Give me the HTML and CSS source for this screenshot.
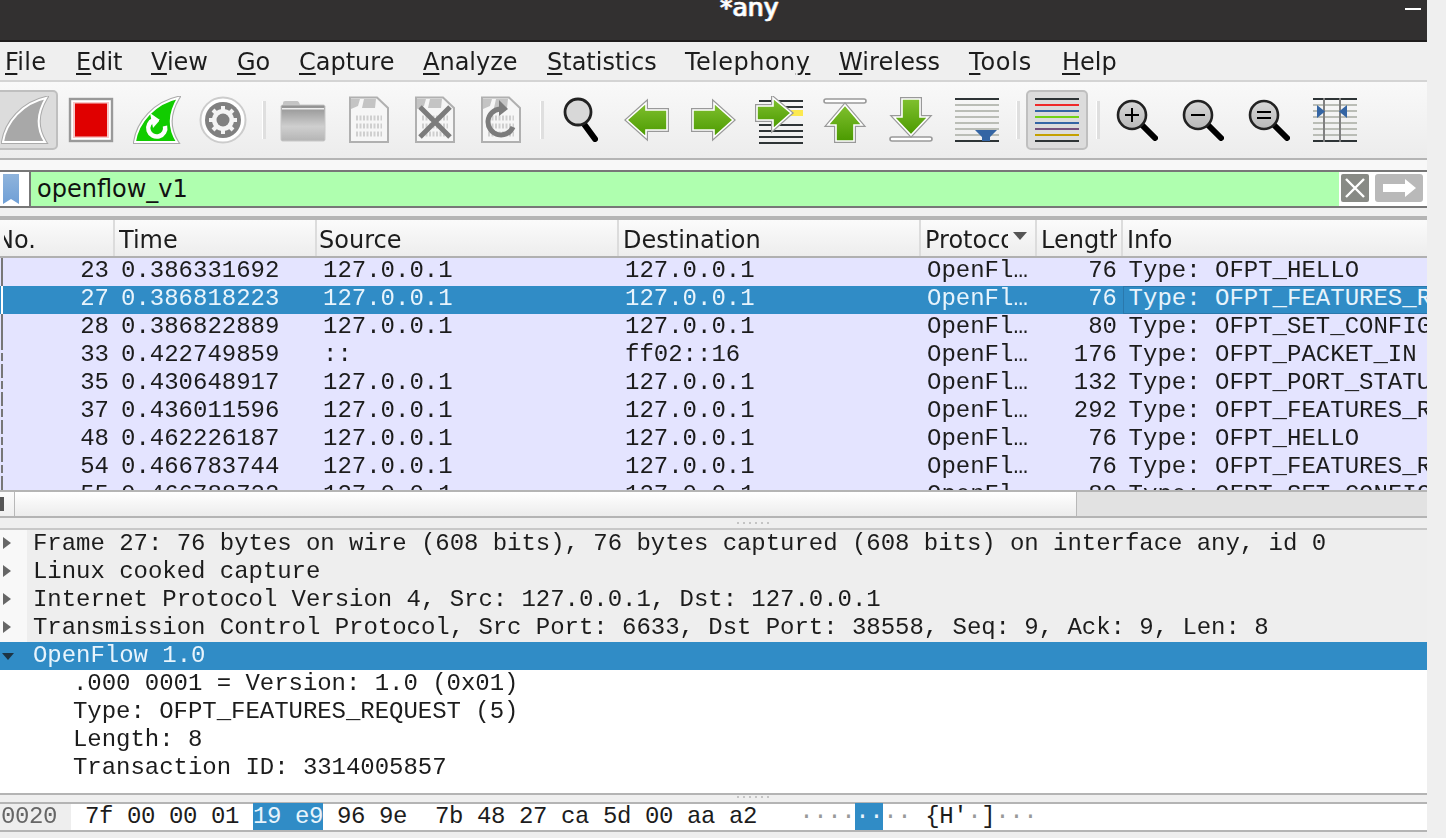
FILE: index.html
```html
<!DOCTYPE html>
<html lang="en">
<head>
<meta charset="utf-8">
<title>*any</title>
<link rel="stylesheet" href="styles.css">
</head>
<body>
<svg class="defs" width="0" height="0" aria-hidden="true">
  <defs>
    <linearGradient id="gr" x1="0" y1="0" x2="0" y2="1"><stop offset="0" stop-color="#80c02f"/><stop offset="1" stop-color="#4b9a00"/></linearGradient>
    <linearGradient id="gl" x1="0" y1="0" x2="0" y2="1"><stop offset="0" stop-color="#d8d8d8"/><stop offset="1" stop-color="#b8b8b8"/></linearGradient>
    <linearGradient id="fo" x1="0" y1="0" x2="0" y2="1"><stop offset="0" stop-color="#8f8f8f"/><stop offset=".6" stop-color="#cfcfcf"/><stop offset="1" stop-color="#b4b4b4"/></linearGradient>
    <linearGradient id="bm" x1="0" y1="0" x2="0" y2="1"><stop offset="0" stop-color="#8fb4dc"/><stop offset="1" stop-color="#6f9fd6"/></linearGradient>
    <path id="fin" d="M2 46 C5 26 22 7 45 2 C36 17 35 32 44 46 Z"/>
    <path id="arr" d="M4 14 H25 V7 L44 24 L25 41 V34 H4 Z"/>
    <g id="sheet">
      <path d="M5 1.5 H32 L43 12 V46 H5 Z" fill="#f6f6f6" stroke="#b0b0b0" stroke-width="2"/>
      <path d="M6 3 H15 L13 10 L6 13 Z M19 3 H31 L30 12 H17 Z" fill="#c4c4c4"/>
      <g stroke="#cfcfcf" stroke-width="5" stroke-dasharray="2 1.5">
        <path d="M11 22 H37 M11 30 H37 M11 38 H37"/>
      </g>
    </g>
    <g id="glass">
      <line x1="28" y1="28" x2="42" y2="42" stroke="#000" stroke-width="6" stroke-linecap="round"/>
      <circle cx="19" cy="19" r="14" fill="url(#gl)" stroke="#222" stroke-width="2.6"/>
    </g>
  </defs>
</svg>
<div class="window">
  <header class="titlebar">
    <span class="wintitle">*any</span>
    <span class="minimize"></span>
  </header>

  <nav class="menubar">
    <span class="menu m-file"><u>F</u>ile</span>
    <span class="menu m-edit"><u>E</u>dit</span>
    <span class="menu m-view"><u>V</u>iew</span>
    <span class="menu m-go"><u>G</u>o</span>
    <span class="menu m-capture"><u>C</u>apture</span>
    <span class="menu m-analyze"><u>A</u>nalyze</span>
    <span class="menu m-statistics"><u>S</u>tatistics</span>
    <span class="menu m-telephony">Telephon<u>y</u></span>
    <span class="menu m-wireless"><u>W</u>ireless</span>
    <span class="menu m-tools"><u>T</u>ools</span>
    <span class="menu m-help"><u>H</u>elp</span>
  </nav>

  <div class="toolbar">
    <div class="tool checked"><svg viewBox="0 0 48 48"><use href="#fin" fill="none" stroke="#aaa" stroke-width="4"/><use href="#fin" fill="#a8a8a8" stroke="#fff" stroke-width="2"/></svg></div>
    <div class="tool"><svg viewBox="0 0 48 48"><rect x="3" y="3" width="42" height="42" fill="#fff" stroke="#999" stroke-width="2.4"/><rect x="6" y="6" width="36" height="36" fill="#f6c8c8"/><rect x="8" y="7.5" width="32" height="33" fill="#e00000"/></svg></div>
    <div class="tool"><svg viewBox="0 0 48 48"><use href="#fin" fill="none" stroke="#aaa" stroke-width="4"/><use href="#fin" fill="#11cc00" stroke="#fff" stroke-width="1.8"/><path d="M32 30 A8.5 8.5 0 1 1 21 24" fill="none" stroke="#fff" stroke-width="4.5"/><path d="M17 17 L27 24 L20 32 Z" fill="#fff"/><path d="M27 24 V32 H23" fill="none" stroke="#11cc00" stroke-width="2"/></svg></div>
    <div class="tool"><svg viewBox="0 0 48 48"><circle cx="24" cy="24" r="22.5" fill="#fff" stroke="#ccc" stroke-width="2"/><circle cx="24" cy="24" r="18" fill="#808080"/><g stroke="#f4f4f4" stroke-width="4"><path d="M24 10 V38 M10 24 H38 M14 14 L34 34 M34 14 L14 34"/></g><circle cx="24" cy="24" r="11" fill="#f4f4f4"/><circle cx="24" cy="24" r="6.5" fill="#808080"/></svg></div>
    <div class="sep"></div>
    <div class="tool"><svg viewBox="0 0 48 48"><path d="M4 9 V7 Q4 5 6 5 H18 Q20 5 21 9 Z" fill="#c4c4c4"/><rect x="2" y="9" width="44" height="36" rx="1.5" fill="url(#fo)" stroke="#c8c8c8" stroke-width="1"/><rect x="3" y="12" width="42" height="1.5" fill="#eee"/></svg></div>
    <div class="tool"><svg viewBox="0 0 48 48"><use href="#sheet"/></svg></div>
    <div class="tool"><svg viewBox="0 0 48 48"><use href="#sheet"/><path d="M9 11 L39 41 M39 11 L9 41" stroke="#7c7c7c" stroke-width="5"/></svg></div>
    <div class="tool"><svg viewBox="0 0 48 48"><use href="#sheet"/><path d="M36 31 A13 13 0 1 1 23 13" fill="none" stroke="#7c7c7c" stroke-width="5"/><path d="M22 4 L31 13 L22 20 Z" fill="#7c7c7c"/></svg></div>
    <div class="sep"></div>
    <div class="tool"><svg viewBox="0 0 48 48"><line x1="27" y1="28" x2="38" y2="43" stroke="#000" stroke-width="6" stroke-linecap="round"/><circle cx="21" cy="16" r="13" fill="#d8d8d8" stroke="#222" stroke-width="2.8"/></svg></div>
    <div class="tool"><svg viewBox="0 0 48 48"><g transform="matrix(-1 0 0 1 48 0)"><use href="#arr" fill="none" stroke="#999" stroke-width="4"/><use href="#arr" fill="url(#gr)" stroke="#fff" stroke-width="1.6"/></g></svg></div>
    <div class="tool"><svg viewBox="0 0 48 48"><use href="#arr" fill="none" stroke="#999" stroke-width="4"/><use href="#arr" fill="url(#gr)" stroke="#fff" stroke-width="1.6"/></svg></div>
    <div class="tool"><svg viewBox="0 0 48 48"><g stroke="#2e3436" stroke-width="2"><path d="M4 5 H48 M4 11 H48 M4 29 H48 M4 35 H48 M4 41 H48 M4 47 H48"/></g><rect x="36" y="14" width="12" height="6" fill="#fce94f"/><path d="M2 10 H18 V2 L36 17 L18 33 V24 H2 Z" fill="none" stroke="#999" stroke-width="4"/><path d="M2 10 H18 V2 L36 17 L18 33 V24 H2 Z" fill="url(#gr)" stroke="#fff" stroke-width="1.6"/></svg></div>
    <div class="tool"><svg viewBox="0 0 48 48"><rect x="3" y="3" width="42" height="4" rx="2" fill="#fff" stroke="#999" stroke-width="1.6"/><path d="M24 9 L41 29 H33 V45 H15 V29 H7 Z" fill="none" stroke="#999" stroke-width="4"/><path d="M24 9 L41 29 H33 V45 H15 V29 H7 Z" fill="url(#gr)" stroke="#fff" stroke-width="1.6"/></svg></div>
    <div class="tool"><svg viewBox="0 0 48 48"><rect x="3" y="41" width="42" height="4" rx="2" fill="#fff" stroke="#999" stroke-width="1.6"/><path d="M15 3 H33 V21 H41 L24 39 L7 21 H15 Z" fill="none" stroke="#999" stroke-width="4"/><path d="M15 3 H33 V21 H41 L24 39 L7 21 H15 Z" fill="url(#gr)" stroke="#fff" stroke-width="1.6"/></svg></div>
    <div class="tool"><svg viewBox="0 0 48 48"><g stroke-width="2"><path d="M2 3 H46 M2 45 H46" stroke="#2e3436"/><path d="M2 9 H46 M2 15 H46 M2 21 H46 M2 27 H46 M2 33 H46 M2 39 H46" stroke="#babdb6"/></g><path d="M22 34 H44 L37 41 V45 H29 V41 Z" fill="#3465a4"/></svg></div>
    <div class="sep"></div>
    <div class="tool checked-b"><svg viewBox="0 0 48 48"><g stroke-width="2"><path d="M2 3 H46" stroke="#2e3436"/><path d="M2 9 H46" stroke="#ef2929"/><path d="M2 15 H46" stroke="#3465a4"/><path d="M2 21 H46" stroke="#73d216"/><path d="M2 27 H46" stroke="#3465a4"/><path d="M2 33 H46" stroke="#75507b"/><path d="M2 39 H46" stroke="#c4a000"/><path d="M2 45 H46" stroke="#2e3436"/></g></svg></div>
    <div class="sep"></div>
    <div class="tool"><svg viewBox="0 0 48 48"><use href="#glass"/><path d="M12 19 H26 M19 12 V26" stroke="#000" stroke-width="2"/></svg></div>
    <div class="tool"><svg viewBox="0 0 48 48"><use href="#glass"/><path d="M12 19 H26" stroke="#000" stroke-width="2"/></svg></div>
    <div class="tool"><svg viewBox="0 0 48 48"><use href="#glass"/><path d="M12 16 H26 M12 22 H26" stroke="#000" stroke-width="2"/></svg></div>
    <div class="tool"><svg viewBox="0 0 48 48"><g stroke-width="2"><path d="M2 3 H46 M2 45 H46" stroke="#2e3436"/><path d="M2 9 H46 M2 15 H46 M2 21 H46 M2 27 H46 M2 33 H46 M2 39 H46" stroke="#babdb6"/><path d="M13 2 V46 M29 2 V46" stroke="#808080"/></g><path d="M6 9 L14 15.5 L6 22 Z M36 9 L28 15.5 L36 22 Z" fill="#3465a4"/></svg></div>
  </div>

  <div class="filterbar">
    <div class="bookmark"><svg viewBox="0 0 16 30" width="16" height="30"><path d="M0 0 H16 V30 L8 25 L0 30 Z" fill="url(#bm)"/></svg></div>
    <div class="filterfield">openflow_v1</div>
    <div class="filteractions">
      <span class="clearbtn"><svg viewBox="0 0 28 28" width="28" height="28"><path d="M5 5 L23 23 M23 5 L5 23" stroke="#fff" stroke-width="2.4"/></svg></span>
      <span class="applybtn"><svg viewBox="0 0 48 28" width="48" height="28"><path d="M8 10 H30 V5 L41 14 L30 23 V18 H8 Z" fill="#fff"/></svg></span>
    </div>
  </div>

  <div class="gap-line"></div>

  <div class="packetlist">
    <div class="head">
      <div class="hc hc-no"><span>No.</span></div>
      <div class="hc"><span>Time</span></div>
      <div class="hc hc-src"><span>Source</span></div>
      <div class="hc"><span>Destination</span></div>
      <div class="hc hc-proto"><span>Protocol</span><i class="sort"></i></div>
      <div class="hc hc-len"><span>Length</span></div>
      <div class="hc hc-last"><span>Info</span></div>
    </div>
    <div class="rows">
      <div class="row"><span class="n">23</span><span>0.386331692</span><span>127.0.0.1</span><span>127.0.0.1</span><span>OpenFl…</span><span class="n">76</span><span class="inf">Type: OFPT_HELLO</span></div>
      <div class="row sel"><span class="n">27</span><span>0.386818223</span><span>127.0.0.1</span><span>127.0.0.1</span><span>OpenFl…</span><span class="n">76</span><span class="inf focus">Type: OFPT_FEATURES_REQUEST</span></div>
      <div class="row"><span class="n">28</span><span>0.386822889</span><span>127.0.0.1</span><span>127.0.0.1</span><span>OpenFl…</span><span class="n">80</span><span class="inf">Type: OFPT_SET_CONFIG</span></div>
      <div class="row dash"><span class="n">33</span><span>0.422749859</span><span>::</span><span>ff02::16</span><span>OpenFl…</span><span class="n">176</span><span class="inf">Type: OFPT_PACKET_IN</span></div>
      <div class="row dash"><span class="n">35</span><span>0.430648917</span><span>127.0.0.1</span><span>127.0.0.1</span><span>OpenFl…</span><span class="n">132</span><span class="inf">Type: OFPT_PORT_STATUS</span></div>
      <div class="row dash"><span class="n">37</span><span>0.436011596</span><span>127.0.0.1</span><span>127.0.0.1</span><span>OpenFl…</span><span class="n">292</span><span class="inf">Type: OFPT_FEATURES_REPLY</span></div>
      <div class="row dash"><span class="n">48</span><span>0.462226187</span><span>127.0.0.1</span><span>127.0.0.1</span><span>OpenFl…</span><span class="n">76</span><span class="inf">Type: OFPT_HELLO</span></div>
      <div class="row dash"><span class="n">54</span><span>0.466783744</span><span>127.0.0.1</span><span>127.0.0.1</span><span>OpenFl…</span><span class="n">76</span><span class="inf">Type: OFPT_FEATURES_REQUEST</span></div>
      <div class="row dash"><span class="n">55</span><span>0.466788722</span><span>127.0.0.1</span><span>127.0.0.1</span><span>OpenFl…</span><span class="n">80</span><span class="inf">Type: OFPT_SET_CONFIG</span></div>
    </div>
    <div class="hscroll">
      <div class="sb-left"><i></i></div>
      <div class="sb-thumb"></div>
      <div class="sb-trough"></div>
    </div>
  </div>

  <div class="splitter"><i></i></div>

  <div class="details">
    <div class="dr col"><i class="tw"></i><span>Frame 27: 76 bytes on wire (608 bits), 76 bytes captured (608 bits) on interface any, id 0</span></div>
    <div class="dr col"><i class="tw"></i><span>Linux cooked capture</span></div>
    <div class="dr col"><i class="tw"></i><span>Internet Protocol Version 4, Src: 127.0.0.1, Dst: 127.0.0.1</span></div>
    <div class="dr col"><i class="tw"></i><span>Transmission Control Protocol, Src Port: 6633, Dst Port: 38558, Seq: 9, Ack: 9, Len: 8</span></div>
    <div class="dr dsel"><i class="tw open"></i><span>OpenFlow 1.0</span></div>
    <div class="dr child"><span>.000 0001 = Version: 1.0 (0x01)</span></div>
    <div class="dr child"><span>Type: OFPT_FEATURES_REQUEST (5)</span></div>
    <div class="dr child"><span>Length: 8</span></div>
    <div class="dr child"><span>Transaction ID: 3314005857</span></div>
  </div>

  <div class="splitter2"><i></i></div>

  <div class="hex">
    <div class="offset">0020</div>
    <div class="bytes">7f 00 00 01 <b>19 e9</b> 96 9e  7b 48 27 ca 5d 00 aa a2   <s>····</s><b>··</b><s>··</s> {H'<s>·</s>]<s>···</s></div>
  </div>
  <div class="tail"></div>
</div>
</body>
</html>
```
FILE: styles.css
```css
* { box-sizing: border-box; }
html, body { margin: 0; padding: 0; }
body { background: #efefef; width: 1446px; height: 838px; overflow: hidden; }
.defs { position: absolute; }
.window {
  width: 1427px; height: 838px; overflow: hidden;
  display: flex; flex-direction: column;
  font-family: "DejaVu Sans", sans-serif; font-size: 24px; color: #1c1c1c;
}

.titlebar {
  height: 42px; flex: none; display: flex; align-items: flex-start;
  background: #323030; border-bottom: 2px solid #1f1d1d;
}
.wintitle {
  margin-left: 720px; margin-top: -7px; line-height: 30px;
  font-size: 25px; color: #fff; -webkit-text-stroke: .5px #fff;
  text-shadow: -1px 0 #7fb5ea, 1px 0 #e0a878;
}
.minimize { margin-left: auto; margin-right: 6px; margin-top: 8px; width: 16px; height: 2px; background: #fff; }

.menubar {
  height: 40px; flex: none; display: flex; align-items: center;
  padding-left: 5px; background: #efefef; border-bottom: 2px solid #d4d4d4;
}
.menu { display: block; white-space: nowrap; padding-top: 2px; filter: blur(.3px); }
.menu u { text-decoration-thickness: 2px; text-underline-offset: 3px; }
.m-file { width: 71px; letter-spacing: .3px; } .m-edit { width: 75px; } .m-view { width: 86px; } .m-go { width: 62px; }
.m-capture { width: 124px; } .m-analyze { width: 124px; } .m-statistics { width: 138px; }
.m-telephony { width: 154px; letter-spacing: .45px; } .m-wireless { width: 130px; letter-spacing: .1px; } .m-tools { width: 93px; letter-spacing: .8px; }

.toolbar {
  height: 78px; flex: none; display: flex; align-items: center;
  background: linear-gradient(#f9f9f9, #ececec); border-bottom: 2px solid #b4b4b4;
  margin-left: -8px;
}
.tool { width: 66px; height: 60px; flex: none; display: flex; align-items: center; justify-content: center; border: 2px solid transparent; }
.tool svg { width: 48px; height: 48px; display: block; filter: blur(.35px); }
.checked, .checked-b { background: #dcdcdc; border-radius: 5px; border-color: #bfbfbf; }
.checked-b { width: 62px; margin: 0 2px; }
.sep { width: 14px; height: 38px; flex: none; }
.sep::after { content: ""; display: block; width: 3px; height: 38px; margin-left: 6px; background: #dfdfdf; border-left: 1px solid #fff; }

.filterbar { height: 48px; flex: none; padding-top: 10px; display: flex; background: #f8f8f8; }
.bookmark { width: 31px; background: #fff; border: solid #777; border-width: 2px 2px 2px 0; padding: 2px 0 0 3px; }
.bookmark svg { display: block; }
.filterfield {
  flex: 1; background: #afffaf; border: solid #777; border-width: 2px 0;
  padding-left: 6px; line-height: 35px; color: #111;
}
.filteractions { width: 88px; background: #fff; border: solid #777; border-width: 2px 0; display: flex; padding: 2px 0 0 2px; gap: 6px; }
.clearbtn { width: 28px; height: 28px; background: #888a85; border-radius: 2px; display: block; }
.applybtn { width: 48px; height: 28px; background: #b9b9b9; border-radius: 3px; display: block; }
.clearbtn svg, .applybtn svg { display: block; }

.gap-line { height: 12px; flex: none; background: #f0f0f0; border-bottom: 4px solid #b4b4b4; }

.packetlist { flex: none; height: 300px; display: flex; flex-direction: column; font-family: "Liberation Mono", monospace; }
.head, .row { display: grid; grid-template-columns: 115px 202px 302px 302px 116px 86px 304px; }
.head {
  height: 38px; flex: none; font-family: "DejaVu Sans", sans-serif;
  background: linear-gradient(#fbfbfb, #ededed); border-bottom: 2px solid #b0b0b0;
}
.hc { border-right: 2px solid #dcdcdc; overflow: hidden; white-space: nowrap; padding-left: 4px; line-height: 40px; position: relative; }
.hc span { display: block; overflow: hidden; filter: blur(.3px); }
.hc-no { text-indent: -8px; }
.hc-src { padding-left: 2px; }
.hc-proto span { width: 83px; }
.hc-len span { width: 76px; }
.hc-last { border-right: 0; }
.sort { position: absolute; right: 8px; top: 12px; border: 7px solid transparent; border-top: 8px solid #555; border-bottom: 0; }

.rows { height: 232px; flex: none; overflow: hidden; background: #e4e4ff; }
.row {
  height: 28px; line-height: 26px; background: linear-gradient(#777, #777) 1px 0 / 2px 100% no-repeat, #e4e4ff;
  white-space: pre; color: #1c1c1c;
}
.row.dash { background: repeating-linear-gradient(#777 0 8px, #e4e4ff 8px 11px) 1px 0 / 2px 100% no-repeat, #e4e4ff; }
.row span { padding-left: 6px; overflow: hidden; display: block; filter: blur(.3px); }
.row .n { text-align: right; padding: 0 6px 0 0; }
.row .inf { padding-left: 5.6px; }
.row.sel { background: linear-gradient(#fff, #fff) 1px 0 / 2px 100% no-repeat, #308cc6; color: #e8f4fc; }
.row .focus { box-shadow: inset 1px 1px 0 #2a78ac, inset 0 -1px 0 #2a78ac; filter: none; }

.hscroll { height: 28px; flex: none; display: flex; border: solid #b4b4b4; border-width: 2px 0; background: #e2e2e2; }
.sb-left { width: 15px; background: linear-gradient(#fbfbfb, #efefef); border-right: 1px solid #b8b8b8; overflow: hidden; padding-top: 5px; }
.sb-left i { display: block; width: 4px; height: 14px; background: #555; }
.sb-thumb { width: 1062px; background: linear-gradient(#fff, #ececec); border-right: 1px solid #b8b8b8; }
.sb-trough { flex: 1; }

.splitter { height: 10px; flex: none; background: #efefef; border-bottom: 2px solid #c8c8c8; padding: 2px 0 0 737px; }
.splitter i, .splitter2 i { display: block; width: 33px; height: 2px; background: repeating-linear-gradient(90deg, #c4c4c4 0 2px, transparent 2px 6px); }

.details { height: 263px; flex: none; background: #fff; font-family: "Liberation Mono", monospace; letter-spacing: -.035px; overflow: hidden; }
.dr { height: 28px; line-height: 27px; position: relative; white-space: pre; }
.dr span { display: block; filter: blur(.3px); }
.col { background: linear-gradient(90deg, #f8f8f8 27px, #eeeeee 27px); padding-left: 33px; }
.dsel { background: #308cc6; color: #e8f4fc; padding-left: 33px; }
.child { padding-left: 73px; }
.tw { position: absolute; left: 3px; top: 7px; border: solid transparent; border-width: 6px 0 6px 8px; border-left-color: #666; }
.tw.open { left: 2px; top: 11px; border-width: 7px 6px 0 6px; border-color: #1d3444 transparent transparent; }

.splitter2 { height: 11px; flex: none; background: #efefef; border: solid #b4b4b4; border-width: 2px 0; padding: 1px 0 0 737px; }
.hex { height: 28px; flex: none; display: flex; background: #fff; border-bottom: 2px solid #b4b4b4; font-family: "Liberation Mono", monospace; line-height: 25px; letter-spacing: -.4px; white-space: pre; }
.offset { width: 71px; background: #eee; color: #666; padding-left: 1px; filter: blur(.3px); }
.bytes { padding-left: 14px; }
.bytes b { font-weight: normal; background: #308cc6; color: #e8f4fc; }
.bytes s { text-decoration: none; color: #999; }
.tail { flex: 1; background: #eee; }
```
